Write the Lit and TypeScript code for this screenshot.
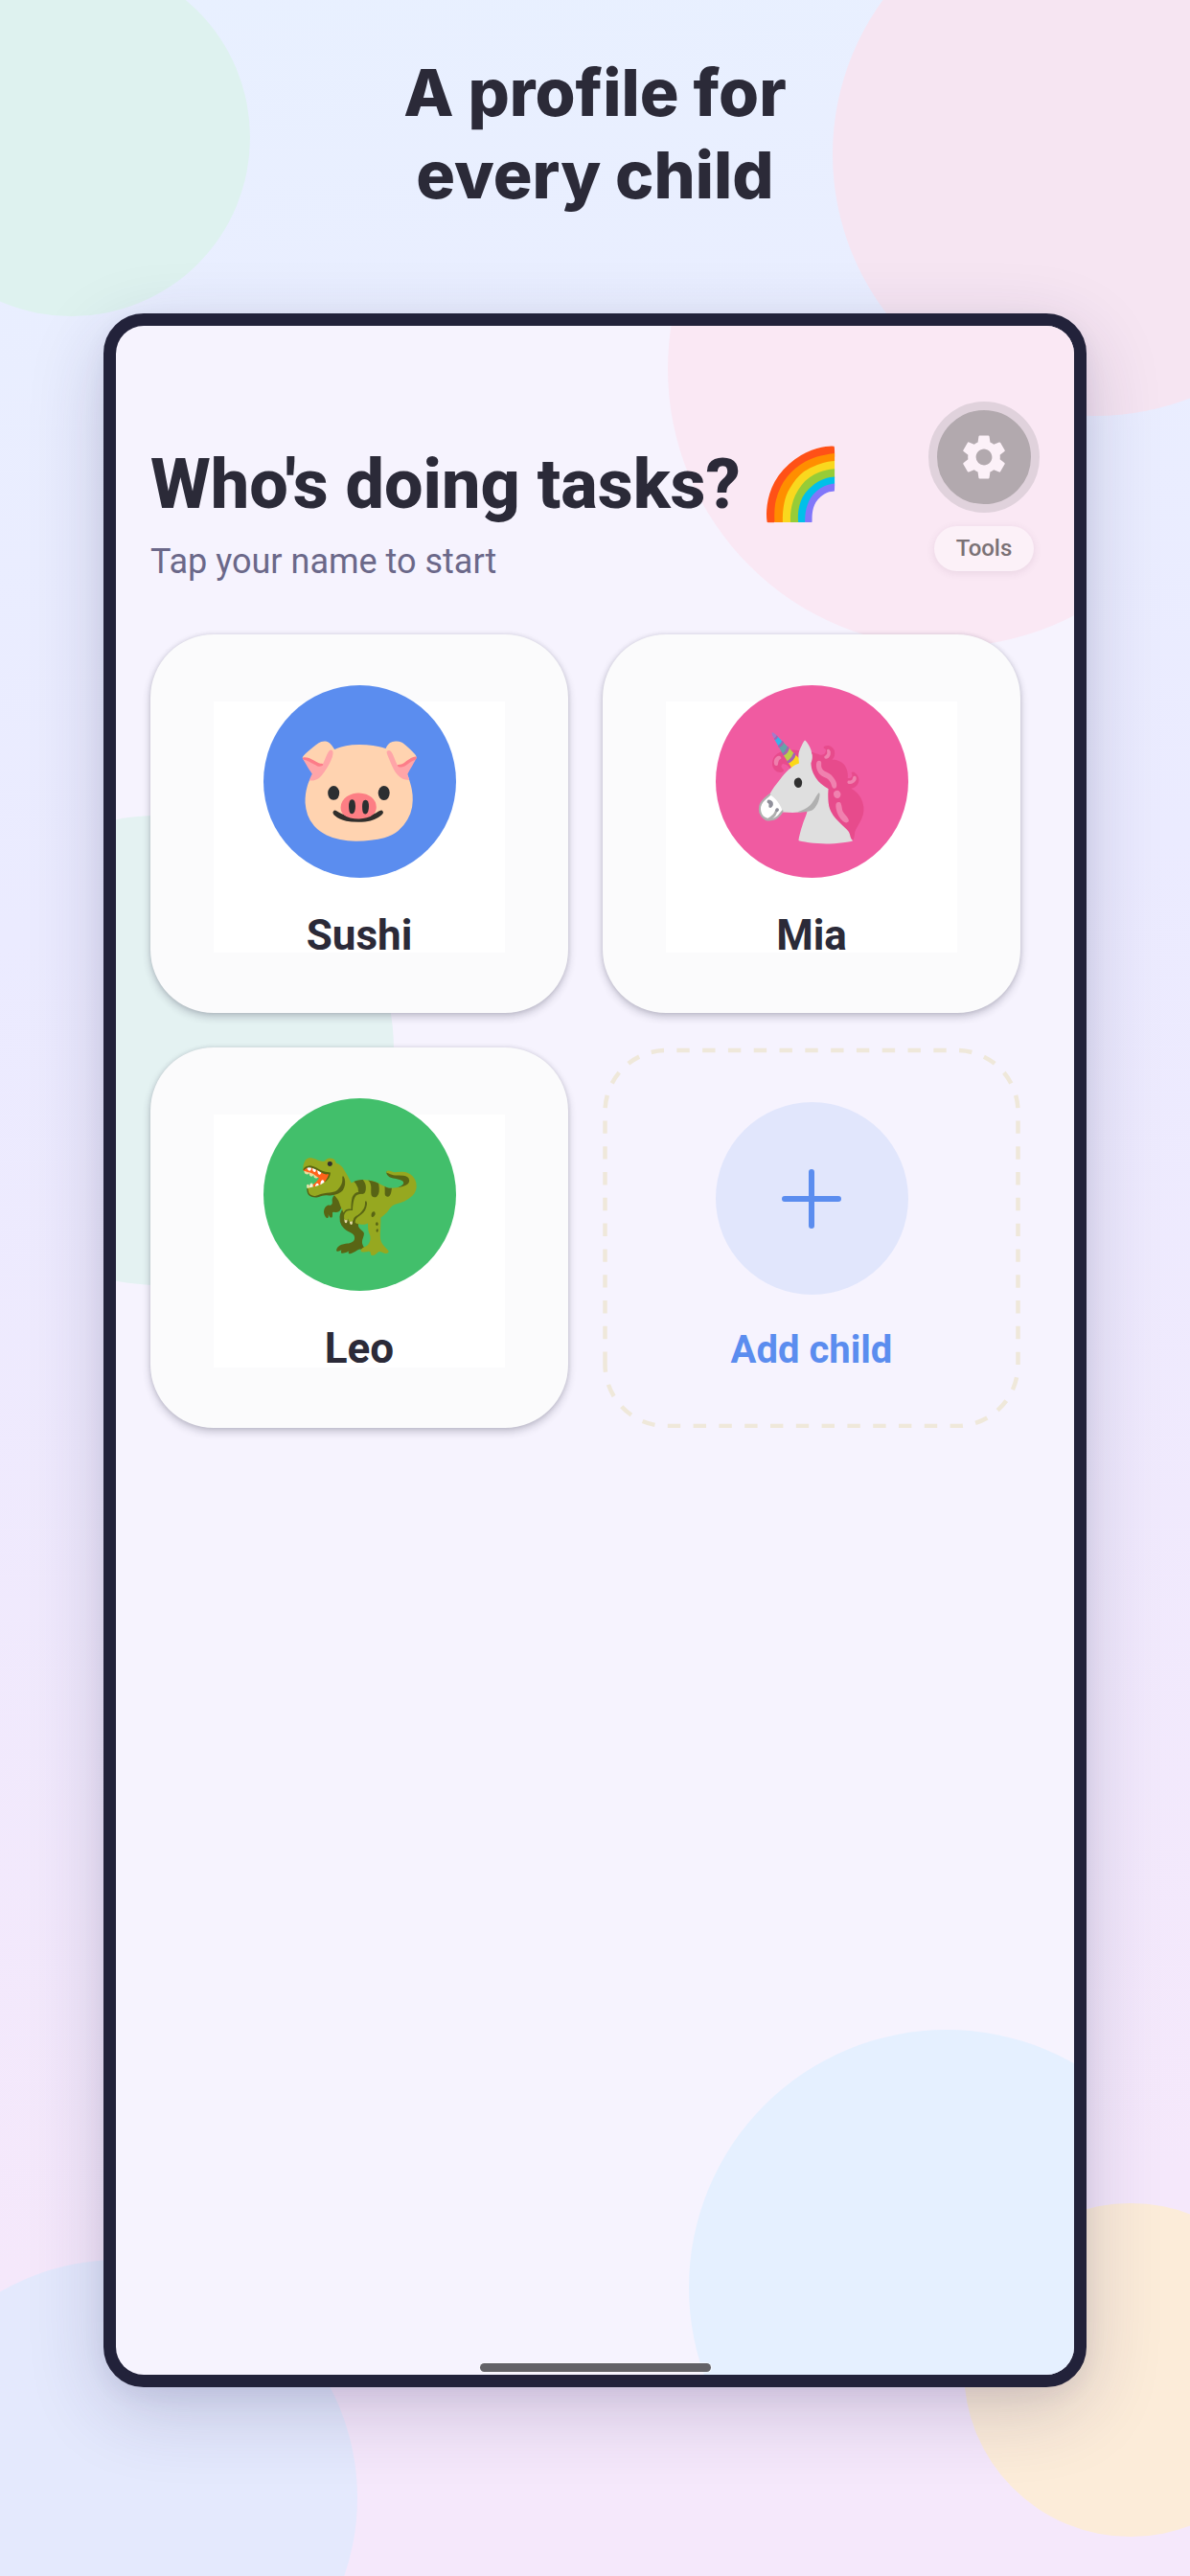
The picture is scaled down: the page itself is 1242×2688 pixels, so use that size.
import { LitElement, css, html, svg } from 'lit';
import { customElement, property } from 'lit/decorators.js';

interface Child {
  name: string;
  emoji: string;
  tone: 'blue' | 'pink' | 'green';
}

const CHILDREN: Child[] = [
  { name: 'Sushi', emoji: '🐷', tone: 'blue' },
  { name: 'Mia', emoji: '🦄', tone: 'pink' },
  { name: 'Leo', emoji: '🦖', tone: 'green' },
];

const gearIcon = svg`
  <path d="M19.14 12.94c.04-.3.06-.61.06-.94 0-.32-.02-.64-.07-.94l2.03-1.58c.18-.14.23-.41.12-.61l-1.92-3.32c-.12-.22-.37-.29-.59-.22l-2.39.96c-.5-.38-1.03-.7-1.62-.94l-.36-2.54c-.04-.24-.24-.41-.48-.41h-3.84c-.24 0-.43.17-.47.41l-.36 2.54c-.59.24-1.13.57-1.62.94l-2.39-.96c-.22-.08-.47 0-.59.22L2.74 8.87c-.12.21-.08.47.12.61l2.03 1.58c-.05.3-.09.63-.09.94s.02.64.07.94l-2.03 1.58c-.18.14-.23.41-.12.61l1.92 3.32c.12.22.37.29.59.22l2.39-.96c.5.38 1.03.7 1.62.94l.36 2.54c.05.24.24.41.48.41h3.84c.24 0 .44-.17.47-.41l.36-2.54c.59-.24 1.13-.56 1.62-.94l2.39.96c.22.08.47 0 .59-.22l1.92-3.32c.12-.22.07-.47-.12-.61l-2.01-1.58zM12 15.6A3.61 3.61 0 0 1 8.4 12c0-1.98 1.62-3.6 3.6-3.6s3.6 1.62 3.6 3.6-1.62 3.6-3.6 3.6z"/>
`;

/** Card for one child: round avatar with the name below it. */
@customElement('profile-card')
export class ProfileCard extends LitElement {
  @property({ type: String })
  name = '';

  @property({ type: String })
  emoji = '';

  @property({ type: String, reflect: true })
  tone: Child['tone'] = 'blue';

  static override styles = css`
    :host {
      display: flex;
    }

    .card {
      flex: 1;
      display: flex;
      flex-direction: column;
      align-items: center;
      gap: 34px;
      padding: 53px 0 55px;
      border: 0;
      border-radius: 66px;
      background: linear-gradient(#ffffff, #ffffff) center top 70px / calc(100% - 132px) calc(100% - 133px) no-repeat #fbfbfc;
      box-shadow: 0 4px 8px rgba(34, 34, 60, 0.24), 0 0 4px rgba(34, 34, 60, 0.12);
      font-family: Roboto, sans-serif;
      color: #2b2a38;
      cursor: pointer;
    }

    .avatar {
      display: flex;
      align-items: center;
      justify-content: center;
      width: 201px;
      height: 201px;
      box-sizing: border-box;
      padding-top: 12px;
      border-radius: 50%;
      background: #5b8def;
      font-size: 108px;
      line-height: 120px;
    }

    :host([tone='pink']) .avatar {
      background: #f05ba1;
    }

    :host([tone='green']) .avatar {
      background: #42bf6b;
    }

    .name {
      font-size: 44px;
      font-weight: 700;
      line-height: 52px;
    }
  `;

  override render() {
    return html`
      <button class="card" type="button">
        <span class="avatar">${this.emoji}</span>
        <span class="name">${this.name}</span>
      </button>
    `;
  }
}

/** Dashed card that adds a new profile. */
@customElement('add-card')
export class AddCard extends LitElement {
  static override styles = css`
    :host {
      display: flex;
    }

    .card {
      position: relative;
      flex: 1;
      display: flex;
      flex-direction: column;
      align-items: center;
      gap: 34px;
      padding: 57px 0;
      border: 0;
      background: none;
      font-family: Roboto, sans-serif;
      color: #5b8def;
      cursor: pointer;
    }

    .outline {
      position: absolute;
      inset: 0;
      width: 100%;
      height: 100%;
      fill: none;
      stroke: #efe8da;
      stroke-width: 4.5;
      stroke-dasharray: 13.4 13.4;
    }

    .circle {
      display: flex;
      align-items: center;
      justify-content: center;
      width: 201px;
      height: 201px;
      border-radius: 50%;
      background: #e1e6fc;
    }

    .plus {
      width: 62px;
      height: 62px;
      stroke: #5b8def;
      stroke-width: 6;
      stroke-linecap: round;
    }

    .label {
      font-size: 40px;
      font-weight: 700;
      line-height: 48px;
    }
  `;

  override render() {
    return html`
      <button class="card" type="button">
        <svg class="outline" viewBox="0 0 436 397" preserveAspectRatio="none" aria-hidden="true">
          <path d="M2.5 331V67A64 64 0 0 1 66.5 3H369.5A64 64 0 0 1 433.5 67V331A64 64 0 0 1 369.5 395H66.5A64 64 0 0 1 2.5 331Z" />
        </svg>
        <span class="circle">
          <svg class="plus" viewBox="0 0 62 62" aria-hidden="true">
            <path d="M31 3V59M3 31H59" />
          </svg>
        </span>
        <span class="label">Add child</span>
      </button>
    `;
  }
}

@customElement('app-root')
export class AppRoot extends LitElement {
  static override styles = css`
    :host {
      display: flex;
      flex-direction: column;
      position: relative;
      box-sizing: border-box;
      min-height: 100vh;
      padding: 53px 108px 197px;
      overflow: hidden;
      background: linear-gradient(175deg, #e8f0ff 0%, #ebebff 35%, #f5e8fb 85%);
      color: #2b2a38;
    }

    .blob {
      position: absolute;
      border-radius: 50%;
      aspect-ratio: 1;
    }

    .blob-mint {
      left: -9%;
      top: -43px;
      width: 30%;
      background: #def2ef;
    }

    .blob-rose {
      left: 70%;
      top: -112px;
      width: 44%;
      background: #f6e5f2;
    }

    .blob-sky {
      left: -10%;
      bottom: -167px;
      width: 40%;
      background: #e4e9fd;
    }

    .blob-sand {
      left: 81%;
      bottom: 41px;
      width: 28%;
      background: #fcecd9;
    }

    .headline {
      position: relative;
      margin: 0 0 102px;
      font-family: Inter, sans-serif;
      font-size: 68px;
      font-weight: 800;
      line-height: 86px;
      text-align: center;
    }

    .phone {
      position: relative;
      flex: 1;
      display: flex;
      border: 13px solid #22223a;
      border-radius: 42px;
      background: #22223a;
      box-shadow: 0 24px 80px rgba(40, 36, 90, 0.2), 0 8px 24px rgba(40, 36, 90, 0.06);
      font-family: Roboto, sans-serif;
    }

    .screen {
      position: relative;
      flex: 1;
      display: flex;
      flex-direction: column;
      overflow: hidden;
      border-radius: 29px;
      background: #f6f3fe;
    }

    .glow-rose {
      left: 576px;
      top: -245px;
      width: 580px;
      background: #fae8f4;
    }

    .glow-mint {
      left: -200px;
      top: 511px;
      width: 490px;
      background: #e4f2f2;
    }

    .glow-sky {
      left: 598px;
      bottom: -178px;
      width: 538px;
      background: #e5f0ff;
    }

    .header {
      position: relative;
      display: flex;
      justify-content: space-between;
      padding: 79px 36px 0;
    }

    .greeting {
      padding-top: 45px;
    }

    .title {
      margin: 0 0 16px;
      font-size: 72px;
      font-weight: 800;
      line-height: 84px;
      white-space: nowrap;
    }

    .subtitle {
      margin: 0;
      font-size: 36px;
      line-height: 44px;
      color: #6b6889;
    }

    .tools {
      display: flex;
      flex-direction: column;
      align-items: center;
      align-self: flex-start;
      gap: 14px;
      padding: 0;
      border: 0;
      background: none;
      font: inherit;
      cursor: pointer;
    }

    .tools-icon {
      display: flex;
      align-items: center;
      justify-content: center;
      width: 98px;
      height: 98px;
      border: 9px solid #e0d2dc;
      border-radius: 50%;
      background: #b2a9ae;
    }

    .gear {
      width: 56px;
      height: 56px;
      fill: #fcf1f8;
    }

    .tools-label {
      padding: 0 23px;
      border-radius: 24px;
      background: #fcf1f8;
      box-shadow: 0 2px 8px rgba(80, 40, 80, 0.1);
      font-size: 24px;
      font-weight: 500;
      line-height: 47px;
      color: #7b7276;
    }

    .grid {
      position: relative;
      display: grid;
      grid-template-columns: 1fr 1fr;
      gap: 36px;
      padding: 54px 56px 54px 36px;
    }

    .home-bar {
      position: relative;
      align-self: center;
      width: 241px;
      height: 9px;
      margin: auto 0 3px;
      border-radius: 5px;
      background: #636267;
      box-shadow: 0 0 1px 1px rgba(255, 255, 255, 0.5);
    }
  `;

  override render() {
    return html`
      <div class="blob blob-mint"></div>
      <div class="blob blob-rose"></div>
      <div class="blob blob-sky"></div>
      <div class="blob blob-sand"></div>

      <h1 class="headline">A profile for<br />every child</h1>

      <main class="phone">
        <div class="screen">
          <div class="blob glow-rose"></div>
          <div class="blob glow-mint"></div>
          <div class="blob glow-sky"></div>

          <header class="header">
            <div class="greeting">
              <h2 class="title">Who's doing tasks? 🌈</h2>
              <p class="subtitle">Tap your name to start</p>
            </div>
            <button class="tools" type="button">
              <span class="tools-icon">
                <svg class="gear" viewBox="0 0 24 24" aria-hidden="true">${gearIcon}</svg>
              </span>
              <span class="tools-label">Tools</span>
            </button>
          </header>

          <section class="grid">
            ${CHILDREN.map(
              (child) => html`
                <profile-card .name=${child.name} .emoji=${child.emoji} .tone=${child.tone}></profile-card>
              `
            )}
            <add-card></add-card>
          </section>

          <div class="home-bar"></div>
        </div>
      </main>
    `;
  }
}

declare global {
  interface HTMLElementTagNameMap {
    'app-root': AppRoot;
    'profile-card': ProfileCard;
    'add-card': AddCard;
  }
}
